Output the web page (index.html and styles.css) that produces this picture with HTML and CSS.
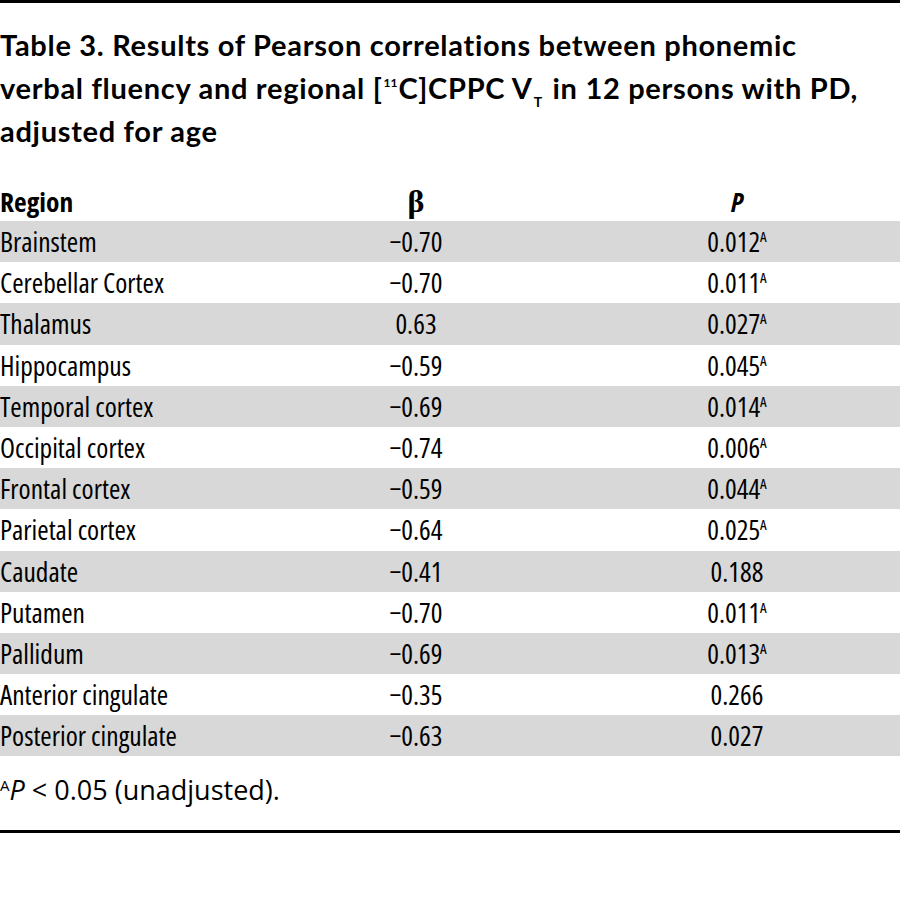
FILE: index.html
```html
<!DOCTYPE html>
<html lang="en">
<head>
<meta charset="utf-8">
<title>Table 3</title>
<link rel="stylesheet" href="styles.css">
</head>
<body>
<div class="page">
  <h1 class="title"><span>Table 3. Results of Pearson correlations between phonemic</span> <span>verbal fluency and regional [</span><sup class="iso">11</sup><span>C]CPPC V</span><sub class="sub">T</sub><span> in 12 persons with PD,</span> <span>adjusted for age</span></h1>
  <div class="table">
    <div class="row head">
      <div class="c1">Region</div>
      <div class="c2 beta">β</div>
      <div class="c3 ital">P</div>
    </div>
    <div class="row shade"><div class="c1">Brainstem</div><div class="c2">−0.70</div><div class="c3">0.012<sup class="fn">A</sup></div></div>
    <div class="row"><div class="c1">Cerebellar Cortex</div><div class="c2">−0.70</div><div class="c3">0.011<sup class="fn">A</sup></div></div>
    <div class="row shade"><div class="c1">Thalamus</div><div class="c2">0.63</div><div class="c3">0.027<sup class="fn">A</sup></div></div>
    <div class="row"><div class="c1">Hippocampus</div><div class="c2">−0.59</div><div class="c3">0.045<sup class="fn">A</sup></div></div>
    <div class="row shade"><div class="c1">Temporal cortex</div><div class="c2">−0.69</div><div class="c3">0.014<sup class="fn">A</sup></div></div>
    <div class="row"><div class="c1">Occipital cortex</div><div class="c2">−0.74</div><div class="c3">0.006<sup class="fn">A</sup></div></div>
    <div class="row shade"><div class="c1">Frontal cortex</div><div class="c2">−0.59</div><div class="c3">0.044<sup class="fn">A</sup></div></div>
    <div class="row"><div class="c1">Parietal cortex</div><div class="c2">−0.64</div><div class="c3">0.025<sup class="fn">A</sup></div></div>
    <div class="row shade"><div class="c1">Caudate</div><div class="c2">−0.41</div><div class="c3">0.188</div></div>
    <div class="row"><div class="c1">Putamen</div><div class="c2">−0.70</div><div class="c3">0.011<sup class="fn">A</sup></div></div>
    <div class="row shade"><div class="c1">Pallidum</div><div class="c2">−0.69</div><div class="c3">0.013<sup class="fn">A</sup></div></div>
    <div class="row"><div class="c1">Anterior cingulate</div><div class="c2">−0.35</div><div class="c3">0.266</div></div>
    <div class="row shade"><div class="c1">Posterior cingulate</div><div class="c2">−0.63</div><div class="c3">0.027</div></div>
  </div>
  <p class="note"><sup class="fnote">A</sup><i>P</i> &lt; 0.05 (unadjusted).</p>
</div>
</body>
</html>
```
FILE: styles.css
```css
html, body {
  margin: 0;
  padding: 0;
  background: #ffffff;
}
.page {
  width: 900px;
  border-top: 3px solid #000;
  border-bottom: 3px solid #000;
  color: #000;
  font-family: "Open Sans", sans-serif;
}
.title {
  margin: 0;
  padding: 20px 0 0 0;
  max-width: 870px;
  font-family: Lato, sans-serif;
  font-weight: 700;
  font-size: 29px;
  letter-spacing: 0.7px;
  line-height: 43px;
}
.iso {
  font-size: 12px;
  letter-spacing: 0;
  margin: 0 1px;
  vertical-align: 12px;
  line-height: 0;
}
.sub {
  font-size: 14px;
  margin: 0 2px 0 1px;
  vertical-align: -8px;
  line-height: 0;
}
.table {
  margin-top: 29px;
}
.row {
  display: grid;
  grid-template-columns: 258px 316px 1fr;
  height: 41.2px;
  align-items: center;
  font-family: "Open Sans", sans-serif;
  font-stretch: condensed;
  font-size: 27.5px;
}
.row.head {
  height: 40px;
  font-weight: 700;
}
.shade {
  background: #d8d8d8;
}
.c2, .c3 {
  text-align: center;
}
.beta {
  font-family: "Liberation Serif", serif;
  font-weight: 700;
  font-size: 32px;
}
.ital {
  font-style: italic;
}
.fn {
  font-size: 15px;
  vertical-align: 10px;
  line-height: 0;
}
.note {
  margin: 0;
  padding: 18px 0 0 0;
  height: 56px;
  font-family: "Open Sans", sans-serif;
  font-size: 27px;
  line-height: 32px;
}
.fnote {
  font-size: 15px;
  vertical-align: 9px;
  line-height: 0;
}
```
